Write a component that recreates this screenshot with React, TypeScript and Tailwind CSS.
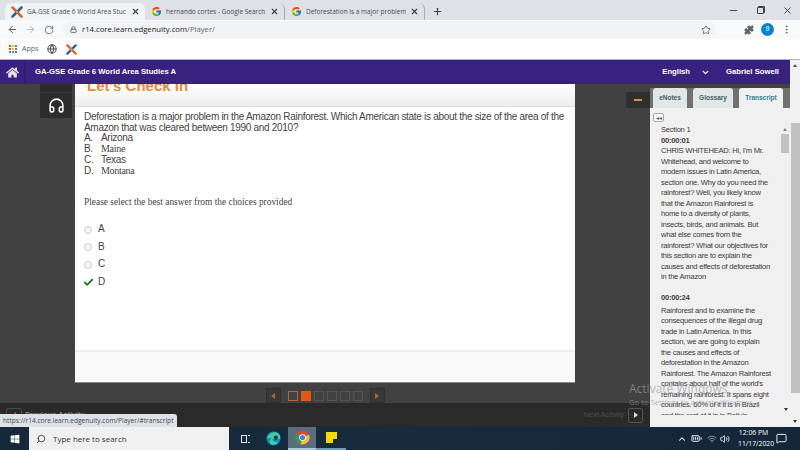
import React from 'react';
import {
  ArrowLeft, ArrowRight, RotateCw, Lock, Star, Puzzle, MoreVertical, Minus, X, Plus, Globe, Headphones,
  ChevronDown, ChevronUp, Search, Check, BatteryFull, Wifi, Volume2, MessageSquare,
} from 'lucide-react';
import { FcGoogle } from 'react-icons/fc';
import { FaWindows, FaHome } from 'react-icons/fa';

const firstBlock = [
  "CHRIS WHITEHEAD: Hi, I'm Mr.",
  'Whitehead, and welcome to',
  'modern issues in Latin America,',
  'section one. Why do you need the',
  'rainforest? Well, you likely know',
  'that the Amazon Rainforest is',
  'home to a diversity of plants,',
  'insects, birds, and animals. But',
  'what else comes from the',
  'rainforest? What our objectives for',
  'this section are to explain the',
  'causes and effects of deforestation',
  'in the Amazon',
];

const secondBlock = [
  'Rainforest and to examine the',
  'consequences of the illegal drug',
  'trade in Latin America. In this',
  'section, we are going to explain',
  'the causes and effects of',
  'deforestation in the Amazon',
  'Rainforest. The Amazon Rainforest',
  "contains about half of the world's",
  'remaining rainforest. It spans eight',
  'countries. 60% of it it is in Brazil',
  'and the rest of it is in Bolivia',
];

const EdgenuityMark = ({ size = 12 }: { size?: number }) => (
  <svg width={size} height={size} viewBox="0 0 16 16" className="shrink-0">
    <path d="M2 2 L14 14" stroke="#d9622b" strokeWidth="3.4" strokeLinecap="round" />
    <path d="M14 2 L2 14" stroke="#2f5d8c" strokeWidth="3.4" strokeLinecap="round" />
    <circle cx="8" cy="8" r="1.8" fill="#e8a33d" />
  </svg>
);

const ChromeTab = ({ icon, title, active, divider }: { icon: React.ReactNode; title: string; active?: boolean; divider?: boolean }) => (
  <div className={`flex items-center h-[17px] w-[140px] pl-[6px] pr-[5px] gap-[4px] shrink-0 rounded-t-[6px] ${active ? 'bg-[#f1f3f4]' : ''} ${divider ? 'border-r border-[#a9acb0]' : ''}`}>
    {icon}
    <span className="flex-1 overflow-hidden whitespace-nowrap text-[6.5px] text-[#4a4c50]">{title}</span>
    <X size={9} strokeWidth={3} className="text-[#3c4043] shrink-0" />
  </div>
);

const Option = ({ label, checked }: { label: string; checked?: boolean }) => (
  <div className="flex items-center h-[17.5px] text-[#444444]">
    <div className="w-[8px] flex justify-center">
      {checked ? (
        <Check size={11} strokeWidth={4} className="text-[#217a21] shrink-0" />
      ) : (
        <div className="w-[8px] h-[8px] rounded-full border border-[#cccccc] bg-[#f6f6f6] shrink-0" />
      )}
    </div>
    <span className="ml-[6px]">{label}</span>
  </div>
);

const PagerArrow = ({ flip }: { flip?: boolean }) => (
  <div className="w-[15px] h-[15px] rounded-[2px] bg-[#383838] border border-[#2e2e2e] flex items-center justify-center">
    <div className={`w-0 h-0 border-y-[3.5px] border-y-transparent ${flip ? 'border-l-[4px] border-l-[#b5622f]' : 'border-r-[4px] border-r-[#b5622f]'}`} />
  </div>
);

const ChromeLogo = () => (
  <svg width="15" height="15" viewBox="0 0 16 16">
    <circle cx="8" cy="8" r="7.5" fill="#d9483b" />
    <path d="M8 8 L1.5 4 A7.5 7.5 0 0 0 6 15.2 Z" fill="#2f9e4f" />
    <path d="M8 8 L14.9 5 A7.5 7.5 0 0 1 6 15.2 Z" fill="#f3c033" />
    <circle cx="8" cy="8" r="3.6" fill="#ffffff" />
    <circle cx="8" cy="8" r="2.8" fill="#4285f4" />
  </svg>
);

const EdgeLogo = () => (
  <svg width="15" height="15" viewBox="0 0 16 16">
    <circle cx="8" cy="8" r="7.5" fill="#1c7fc4" />
    <path d="M1 9 C1.5 3.5 7 0 11.5 1.6 C14.5 2.8 15.6 6 15 8.6 L6.5 8.6 C6.8 11 10 12.4 13.4 11 C11.8 14.4 7.8 15.6 5.4 14.2 C3 12.8 3.4 9 6 7.4 C4 7 2 7.6 1 9 Z" fill="#3fcf9a" />
    <circle cx="10.5" cy="7" r="2.2" fill="#1a3a58" />
  </svg>
);

export default function App() {
  return (
    <div className="relative w-[800px] h-[450px] overflow-hidden flex flex-col bg-white font-['Liberation_Sans',sans-serif]">
      {/* browser tabs */}
      <div className="h-[20px] bg-[#dee1e6] flex items-end pl-[5px] font-['Open_Sans',sans-serif]">
        <ChromeTab active icon={<EdgenuityMark />} title="GA-GSE Grade 6 World Area Stuc" />
        <ChromeTab divider icon={<FcGoogle size={11} />} title="hernando cortes - Google Search" />
        <ChromeTab divider icon={<FcGoogle size={11} />} title="Deforestation is a major problem" />
        <Plus size={11} strokeWidth={2.5} className="ml-[7px] mb-[3px] text-[#3c4043]" />
        <div className="flex-1" />
        <div className="flex items-center gap-[18px] h-full pr-[7px] text-[#3c4043]">
          <Minus size={11} />
          <div className="w-[7px] h-[7px] border border-[#3c4043] rounded-[1px] shadow-[1px_-1px_0_#3c4043]" />
          <X size={11} />
        </div>
      </div>

      {/* address bar */}
      <div className="h-[19px] bg-[#f8f9fa] flex items-center pl-[7px] pr-[8px] text-[#5f6368]">
        <ArrowLeft size={11} className="text-[#4a4d51]" />
        <ArrowRight size={11} className="ml-[7px] text-[#b4b6b9]" />
        <RotateCw size={10} className="ml-[8px]" />
        <div className="ml-[9px] w-[653px] h-[17px] rounded-full bg-[#f1f3f4] flex items-center pl-[7px] pr-[5px]">
          <Lock size={7} strokeWidth={3} />
          <span className="ml-[5px] text-[7.7px] font-['Open_Sans',sans-serif] text-[#202124]">
            r14.core.learn.edgenuity.com<span className="text-[#5f6368]">/Player/</span>
          </span>
          <div className="flex-1" />
          <Star size={10} />
        </div>
        <div className="flex-1" />
        <Puzzle size={10} fill="#5f6368" />
        <div className="ml-[7px] w-[13px] h-[13px] rounded-full bg-[#0b83cf] text-white text-[7px] flex items-center justify-center">9</div>
        <MoreVertical size={11} className="ml-[7px]" />
      </div>

      {/* bookmarks */}
      <div className="h-[21px] bg-white flex items-center pl-[9px] border-b border-[#b4aed0]">
        <div className="grid grid-cols-3 gap-[1px] w-[8px]">
          {['#ea4335', '#fbbc04', '#34a853', '#ea4335', '#fbbc04', '#4285f4', '#34a853', '#4285f4', '#ea4335'].map((c, i) => (
            <div key={i} className="w-[2px] h-[2px]" style={{ backgroundColor: c }} />
          ))}
        </div>
        <span className="ml-[5px] text-[7px] text-[#5f6368] font-['Open_Sans',sans-serif]">Apps</span>
        <Globe size={10} strokeWidth={2.5} className="text-[#4a4d51] ml-[9px]" />
        <div className="ml-[9px]"><EdgenuityMark size={11} /></div>
      </div>

      {/* page and its scrollbar */}
      <div className="h-[367px] flex">
        <div className="w-[790px] flex flex-col">
          {/* course header */}
          <div className="h-[24px] bg-[#37237f] flex items-center text-white font-bold text-[7.7px]">
            <div className="w-[25px] h-full flex items-center justify-center border-r border-[#2f1e70]">
              <FaHome size={13} className="text-[#e3e3e8]" />
            </div>
            <span className="ml-[10px]">GA-GSE Grade 6 World Area Studies A</span>
            <div className="flex-1" />
            <span>English</span>
            <ChevronDown size={9} strokeWidth={3.5} className="ml-[11px]" />
            <span className="ml-[16px] mr-[11px]">Gabriel Sowell</span>
          </div>

          <div className="flex-1 flex min-h-0">
            <div className="w-[650px] flex flex-col">
              <div className="flex-1 flex bg-[#414141] min-h-0">
                {/* tools */}
                <div className="w-[75px] pl-[40px]">
                  <div className="w-[32px] h-[34px] bg-[#2c2c2c] flex flex-col">
                    <div className="h-[9px] border-b border-[#3a3a3a]" />
                    <div className="flex-1 flex items-center justify-center">
                      <Headphones size={17} strokeWidth={2.2} className="text-white" />
                    </div>
                  </div>
                </div>

                {/* activity */}
                <div className="w-[500px] flex flex-col">
                  <div className="h-[299px] bg-white flex flex-col border-b border-[#8a8a8a]">
                    <div className="h-[23px] shrink-0 overflow-hidden bg-gradient-to-b from-white to-[#eeeeee] border-b border-[#dddddd] pl-[12px]">
                      <div className="-mt-[7px] text-[15px] leading-[18px] font-bold text-[#e58a3c]">Let's Check In</div>
                    </div>
                    <div className="flex-1 pl-[9px] pr-[7px] pt-[5px] text-[10px] tracking-[-0.3px] leading-[10.7px] text-[#444444]">
                      <p>Deforestation is a major problem in the Amazon Rainforest. Which American state is about the size of the area of the Amazon that was cleared between 1990 and 2010?</p>
                      <div className="flex"><span className="w-[17px]">A.</span><span>Arizona</span></div>
                      <div className="flex"><span className="w-[17px]">B.</span><span className="font-['Liberation_Serif',serif]">Maine</span></div>
                      <div className="flex"><span className="w-[17px]">C.</span><span>Texas</span></div>
                      <div className="flex"><span className="w-[17px]">D.</span><span className="font-['Liberation_Serif',serif]">Montana</span></div>
                      <p className="mt-[21px] text-[9.4px] tracking-normal font-['Liberation_Serif',serif]">Please select the best answer from the choices provided</p>
                      <div className="mt-[13px]">
                        <Option label="A" />
                        <Option label="B" />
                        <Option label="C" />
                        <Option label="D" checked />
                      </div>
                    </div>
                    <div className="h-[32px] shrink-0 bg-[#f9f9f9] border-t-2 border-[#eeeeee]" />
                  </div>
                  <div className="flex items-center justify-center gap-[7px] mt-[5px]">
                    <PagerArrow />
                    <div className="flex gap-[3px]">
                      <div className="w-[10px] h-[10px] border border-[#b0683a]" />
                      <div className="w-[10px] h-[10px] bg-[#e8570f]" />
                      <div className="w-[10px] h-[10px] border border-[#555555]" />
                      <div className="w-[10px] h-[10px] border border-[#555555]" />
                      <div className="w-[10px] h-[10px] border border-[#555555]" />
                      <div className="w-[10px] h-[10px] border border-[#555555]" />
                    </div>
                    <PagerArrow flip />
                  </div>
                </div>

                {/* collapse handle */}
                <div className="w-[75px] pt-[8px] flex justify-end">
                  <div className="w-[24px] h-[16px] bg-[#2f2f2f] rounded-l-[3px] flex items-center justify-center">
                    <div className="w-[8px] h-[2px] bg-[#e58a3c]" />
                  </div>
                </div>
              </div>

              {/* activity navigation */}
              <div className="h-[24px] shrink-0 bg-[#2a2a2a] flex items-center pl-[6px] pr-[7px] text-[7.4px] text-[#4e4e4e]">
                <div className="w-[16px] h-[15px] rounded-[2px] border border-[#4a4a4a] flex items-center justify-center">
                  <div className="w-0 h-0 border-y-[3.5px] border-y-transparent border-r-[4px] border-r-[#b5622f]" />
                </div>
                <span className="ml-[3px] text-[#888888] font-bold">Previous Activity</span>
                <div className="flex-1" />
                <span>Next Activity</span>
                <div className="ml-[4px] w-[15px] h-[15px] rounded-[2px] border border-[#555555] flex items-center justify-center">
                  <div className="w-0 h-0 border-y-[3.5px] border-y-transparent border-l-[4px] border-l-[#dddddd]" />
                </div>
              </div>
            </div>

            {/* transcript panel */}
            <div className="w-[140px] flex flex-col bg-[#f0f0f0]">
              <div className="h-[24px] shrink-0 bg-[#414141] flex flex-col justify-end">
                <div className="h-[20px] bg-[#707070] flex items-end pl-[3px] gap-[6px] font-bold text-[6.5px]">
                  <div className="w-[34px] h-[20px] rounded-t-[3px] bg-[#e3e6e6] text-[#3d5f66] flex items-center justify-center">eNotes</div>
                  <div className="w-[40px] h-[20px] rounded-t-[3px] bg-[#e3e6e6] text-[#3d5f66] flex items-center justify-center">Glossary</div>
                  <div className="w-[44px] h-[20px] rounded-t-[3px] bg-[#f0f0f0] text-[#2f7f8f] flex items-center justify-center">Transcript</div>
                </div>
              </div>
              <div className="relative flex-1 min-h-0 pl-[3px]">
                <div className="mt-[5px] w-[11px] h-[9px] rounded-[2px] border border-[#aaaaaa] bg-[#f7f7f7] flex items-center justify-center text-[6px] leading-none text-[#666666]">◂◂</div>
                <div className="ml-[8px] mt-[3px] h-[290px] overflow-hidden text-[7.6px] tracking-[-0.25px] leading-[10.5px] text-[#3a3a3a] whitespace-nowrap">
                  <div>Section 1</div>
                  <div className="font-bold">00:00:01</div>
                  {firstBlock.map((line) => (
                    <div key={line}>{line}</div>
                  ))}
                  <div className="h-[10.5px]" />
                  <div className="font-bold mb-[2px]">00:00:24</div>
                  {secondBlock.map((line) => (
                    <div key={line}>{line}</div>
                  ))}
                </div>
                {/* inner scrollbar sits over the text column */}
                <div className="absolute right-[1px] top-[20px] w-[8px] flex flex-col items-center">
                  <div className="w-0 h-0 border-x-[2.5px] border-x-transparent border-b-[3px] border-b-[#888888]" />
                  <div className="mt-[3px] w-[8px] h-[19px] bg-[#c2c2c2]" />
                </div>
                <div className="absolute right-[2px] top-[300px] w-0 h-0 border-x-[2.5px] border-x-transparent border-t-[3px] border-t-[#333333]" />
              </div>
            </div>
          </div>
        </div>

        {/* page scrollbar */}
        <div className="relative w-[10px] bg-[#f1f1f1]">
          <div className="absolute left-[3px] top-[4px] w-0 h-0 border-x-[2.5px] border-x-transparent border-b-[3px] border-b-[#555555]" />
          <div className="mt-[63px] ml-[1px] h-[270px] bg-[#c1c1c1]" />
          <div className="absolute left-[3px] bottom-[4px] w-0 h-0 border-x-[2.5px] border-x-transparent border-t-[3px] border-t-[#333333]" />
        </div>
      </div>

      {/* windows taskbar */}
      <div className="h-[23px] bg-gradient-to-r from-[#16293a] via-[#182b3e] to-[#14263a] flex items-center text-white">
        <div className="w-[29px] flex justify-center">
          <FaWindows size={10} />
        </div>
        <div className="w-[200px] h-full bg-[#f0f0f0] flex items-center pl-[7px] text-[#333333] text-[8px] font-['Open_Sans',sans-serif]">
          <Search size={10} className="-scale-x-100" />
          <span className="ml-[7px]">Type here to search</span>
        </div>
        <div className="w-[30px] flex justify-center">
          <div className="flex gap-[1px] items-center ml-[2px]">
            <div className="w-[6px] h-[8px] border-y border-x border-[#e3e3e3]" />
            <div className="w-[2px] h-[8px] border-y border-[#e3e3e3]" />
          </div>
        </div>
        <div className="w-[29px] flex justify-center"><EdgeLogo /></div>
        <div className="w-[28px] h-full bg-[#5a6d7c] border-b-2 border-[#a9c8de] flex items-center justify-center"><ChromeLogo /></div>
        <div className="w-[30px] h-full flex items-center justify-center border-b-2 border-[#6a9cc0]">
          <div className="w-[11px] h-[11px] bg-[#f5d90a] relative">
            <div className="absolute right-0 bottom-0 w-[4px] h-[4px] bg-[#222222]" />
          </div>
        </div>
        <div className="flex-1" />
        <ChevronUp size={10} strokeWidth={2.5} />
        <BatteryFull size={11} className="ml-[4px]" />
        <Wifi size={10} className="ml-[5px] text-[#9aa3ab]" />
        <Volume2 size={10} className="ml-[3px]" />
        <div className="ml-[8px] w-[31px] text-[6.8px] leading-[10.5px] text-center whitespace-nowrap font-['Open_Sans',sans-serif]">
          <div>12:06 PM</div>
          <div>11/17/2020</div>
        </div>
        <MessageSquare size={11} className="ml-[7px] mr-[13px]" />
      </div>

      {/* link preview above the taskbar */}
      <div className="absolute left-0 top-[414px] h-[13px] w-[177px] rounded-tr-[3px] bg-[#dee1e6] pl-[3px] text-[6.6px] leading-[13px] text-[#45484c] whitespace-nowrap font-['Open_Sans',sans-serif]">
        https://r14.core.learn.edgenuity.com/Player/#transcript
      </div>

      {/* activation watermark */}
      <div className="absolute left-[629px] top-[381px] text-[#9a9a9a]/70 font-['Open_Sans',sans-serif] whitespace-nowrap pointer-events-none">
        <div className="text-[12px] leading-[15px]">Activate Windows</div>
        <div className="text-[7.7px] leading-[12px]">Go to Settings to activate Windows.</div>
      </div>
    </div>
  );
}
